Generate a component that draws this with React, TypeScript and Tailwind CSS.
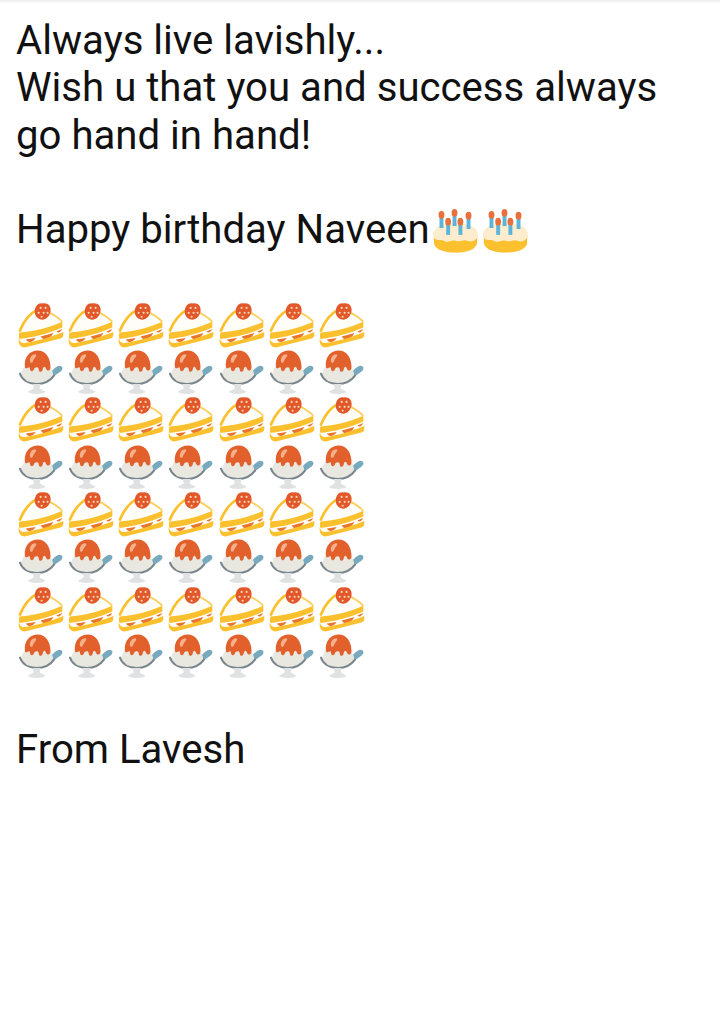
const rows = [0, 1, 2, 3];
const cols = [0, 1, 2, 3, 4, 5, 6];

function Cake() {
  return (
    <svg viewBox="0 0 48 48" className="h-[47.3px] w-[50.3px] shrink-0" preserveAspectRatio="xMinYMin meet">
      <path d="M3 30C7 20 14 12 22 8C31 10 41 15 46 21L46 34C46 36 45 37 43 37L9 46C3 47 1 42 1.500 37C1.500 34 2 32 3 30Z" fill="#fffdf8" />
      <path d="M3 30C7 20 14 12 22 8" fill="none" stroke="#fbc02d" strokeWidth="2.800" strokeLinecap="round" />
      <path d="M30 10.500C36 13 42 17 46 21" fill="none" stroke="#f9cf5f" strokeWidth="1.800" />
      <path d="M2.500 32C17 31 33 27 46 21L46 27C33 33 17 37 2.500 38.500C1.800 37 1.800 34 2.500 32Z" fill="#fbc02d" />
      <path d="M9 39C11 43 16 42 19 37.500ZM24 36C27 41 33 40 37 32.500ZM40 31C42 33 44 32 46 28.500Z" fill="#e8752f" />
      <path d="M1.800 38C3 42 5 43 8 42.500C20 41 33 37 47 31.500L47 34C47 36 46 37.500 44 38L9 47C4 48 1 44 1.800 38Z" fill="#fbc02d" />
      <path d="M18 11C18 5 22 1.500 26 2.500C31 1.500 35 5 34 11C33 16 29 19 26 19C21 19 18 15 18 11Z" fill="#e2582b" />
      <circle cx="24" cy="7" r="1.100" fill="#f8d6b6" />
      <circle cx="29" cy="7" r="1.100" fill="#f8d6b6" />
      <circle cx="22" cy="12" r="1.100" fill="#f8d6b6" />
      <circle cx="27" cy="12" r="1.100" fill="#f8d6b6" />
      <circle cx="31" cy="12" r="1.100" fill="#f8d6b6" />
      <circle cx="25" cy="16" r="1.100" fill="#f8d6b6" />
    </svg>
  );
}

function Ice() {
  return (
    <svg viewBox="0 0 48 48" className="h-[47.3px] w-[50.3px] shrink-0" preserveAspectRatio="xMinYMin meet">
      <path d="M33 27C35 24 38 19 43 18C47 18 47 22 44 24C41 26 38 28 36 31Z" fill="#78a9bd" />
      <path d="M4 27C5 21 9 17 12 15L31 15C34 19 36 23 37 28C34 33 28 36 20 36C11 36 6 32 4 27Z" fill="#e8e8e1" />
      <path d="M3 26C5 32 11 36.500 20 36.500C28 36.500 34 33 37.500 28" fill="none" stroke="#78858c" strokeWidth="2" strokeLinecap="round" />
      <path d="M8 19C7 9 13 2.500 21 2.500C29 2.500 34 10 34 19C34 24 30 24 29 20C28 18 26.500 19 26 22C25 25 22 25 22 21C21 19 18 19 17 22C15 25 13 23 13 20C12 18 9 23 8 19Z" fill="#e2602b" />
      <path d="M13 13C13 9 16 6 19 6.500C21 8 17 10 16 14C15 16 13 15 13 13Z" fill="#f6b18c" />
      <path d="M16 36.500L24 36.500L23 41L29 44.500C26 47.500 14 47.500 11 44.500L17 41Z" fill="#dfe1e2" />
    </svg>
  );
}

function BirthdayCake() {
  const candles = [
    { x: 10.7, top: 7, bottom: 22 },
    { x: 17.5, top: 14, bottom: 29 },
    { x: 24, top: 5, bottom: 20 },
    { x: 30, top: 14, bottom: 29 },
    { x: 38.3, top: 8, bottom: 23 },
  ];
  return (
    <svg viewBox="0 0 50 47" className="ml-[1px] inline-block h-[47px] w-[49px] align-top">
      <path d="M2 29C2 21 12 17 25 17C38 17 48 21 48 29L47 38C45 44 37 47 25 47C13 47 5 44 3 38Z" fill="#fdeccd" />
      <path d="M3 32C6 36 10 33 13 35C17 38 20 34 25 35C30 37 33 33 37 35C41 37 45 35 47 32L47 38C45 44 37 47 25 47C13 47 5 44 3 38Z" fill="#fbc02d" />
      {candles.map((c) => (
        <g key={c.x}>
          <rect x={c.x - 2} y={c.top + 4} width="4" height={c.bottom - c.top - 4} fill="#5cb4d8" />
          <ellipse cx={c.x} cy={c.top + 1.500} rx="3" ry="4" fill="#e9703a" />
        </g>
      ))}
    </svg>
  );
}

export default function App() {
  return (
    <div className="min-h-[1018px] bg-white bg-gradient-to-b from-[#eeeeee] to-white to-[4px] pl-[16px] pt-[17px] font-['Roboto',sans-serif] text-[40.15px] leading-[47.3px] text-[#111111]">
      <p>Always live lavishly...</p>
      <p>Wish u that you and success always</p>
      <p>go hand in hand!</p>
      <p className="h-[47.3px]"></p>
      <p className="whitespace-nowrap">
        Happy birthday Naveen
        <BirthdayCake />
        <BirthdayCake />
      </p>
      <p className="h-[47.3px]"></p>
      <div className="ml-[0.5px]">
        {rows.map((r) => (
          <div key={r}>
            <div className="flex">
              {cols.map((c) => (
                <Cake key={c} />
              ))}
            </div>
            <div className="flex">
              {cols.map((c) => (
                <Ice key={c} />
              ))}
            </div>
          </div>
        ))}
      </div>
      <p className="h-[47.3px]"></p>
      <p>From Lavesh</p>
    </div>
  );
}
